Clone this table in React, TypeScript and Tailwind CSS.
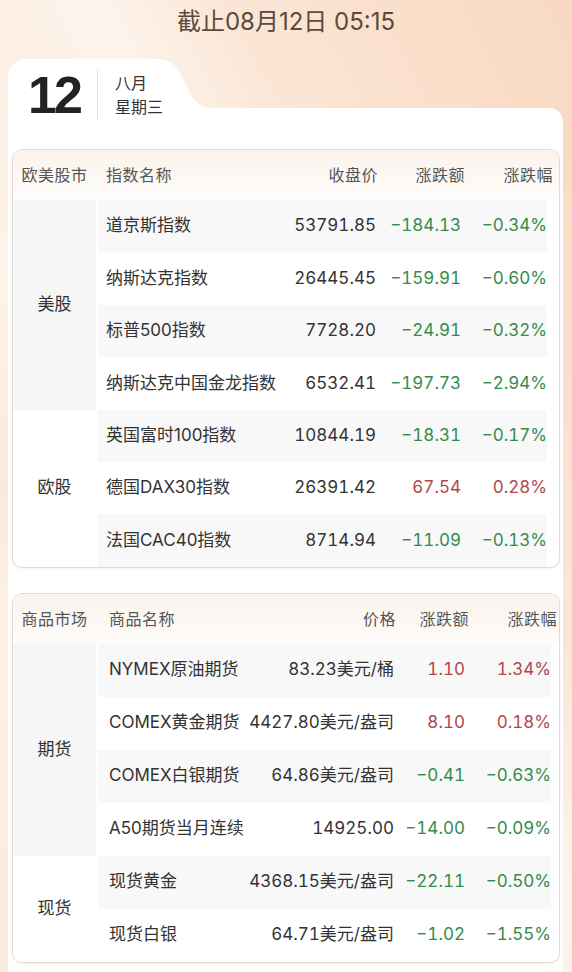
type Row = { name: string; price: string; chg: string; pct: string };
type Group = { label: string; rows: Row[] };

const stocks: Group[] = [
  {
    label: "美股",
    rows: [
      { name: "道京斯指数", price: "53791.85", chg: "−184.13", pct: "−0.34%" },
      { name: "纳斯达克指数", price: "26445.45", chg: "−159.91", pct: "−0.60%" },
      { name: "标普500指数", price: "7728.20", chg: "−24.91", pct: "−0.32%" },
      { name: "纳斯达克中国金龙指数", price: "6532.41", chg: "−197.73", pct: "−2.94%" },
    ],
  },
  {
    label: "欧股",
    rows: [
      { name: "英国富时100指数", price: "10844.19", chg: "−18.31", pct: "−0.17%" },
      { name: "德国DAX30指数", price: "26391.42", chg: "67.54", pct: "0.28%" },
      { name: "法国CAC40指数", price: "8714.94", chg: "−11.09", pct: "−0.13%" },
    ],
  },
];

const goods: Group[] = [
  {
    label: "期货",
    rows: [
      { name: "NYMEX原油期货", price: "83.23美元/桶", chg: "1.10", pct: "1.34%" },
      { name: "COMEX黄金期货", price: "4427.80美元/盎司", chg: "8.10", pct: "0.18%" },
      { name: "COMEX白银期货", price: "64.86美元/盎司", chg: "−0.41", pct: "−0.63%" },
      { name: "A50期货当月连续", price: "14925.00", chg: "−14.00", pct: "−0.09%" },
    ],
  },
  {
    label: "现货",
    rows: [
      { name: "现货黄金", price: "4368.15美元/盎司", chg: "−22.11", pct: "−0.50%" },
      { name: "现货白银", price: "64.71美元/盎司", chg: "−1.02", pct: "−1.55%" },
    ],
  },
];

type Cols = { name: string; price: string; chg: string; pct: string; rowH: string };

const stockCols: Cols = {
  name: "w-[178px] pl-[8px]",
  price: "w-[100px]",
  chg: "w-[85px]",
  pct: "w-[86px]",
  rowH: "h-[52.4px]",
};

const goodsCols: Cols = {
  name: "w-[150px] pl-[11px]",
  price: "w-[146px]",
  chg: "w-[71px]",
  pct: "w-[86px]",
  rowH: "h-[53px]",
};

function color(v: string) {
  return v.startsWith("−") ? "text-[#338c4c]" : "text-[#b0474c]";
}

function Table({
  head,
  groups,
  cols,
}: {
  head: [string, string, string, string, string];
  groups: Group[];
  cols: Cols;
}) {
  let idx = 0;
  return (
    <div className="rounded-[10px] border border-[#e6d9cf] overflow-hidden bg-white shadow-[0_1px_2px_rgba(150,110,80,0.08)]">
      <div className="flex h-[50px] items-center gap-[2px] bg-gradient-to-b from-[#fbf3ec] to-[#fefcfa] text-[16px] tracking-[0.5px] text-[#555]">
        <div className="w-[83px] text-center">{head[0]}</div>
        <div className={cols.name}>{head[1]}</div>
        <div className={`${cols.price} text-right`}>{head[2]}</div>
        <div className={`${cols.chg} text-right`}>{head[3]}</div>
        <div className={`${cols.pct} text-right`}>{head[4]}</div>
      </div>
      {groups.map((g, gi) => (
        <div key={g.label} className="flex gap-[2px]">
          <div
            className={`w-[83px] shrink-0 flex items-center justify-center text-[17px] text-[#333] ${
              gi % 2 === 0 ? "bg-[#f6f6f6]" : "bg-white"
            }`}
          >
            {g.label}
          </div>
          <div className="flex flex-col">
            {g.rows.map((r) => {
              const gray = idx++ % 2 === 0;
              return (
                <div
                  key={r.name}
                  className={`flex items-center ${cols.rowH} text-[17px] text-[#333] whitespace-nowrap ${
                    gray ? "bg-[#f8f8f8]" : "bg-white"
                  }`}
                >
                  <div className={cols.name}>{r.name}</div>
                  <div className={`${cols.price} text-right tabular-nums`}>{r.price}</div>
                  <div className={`${cols.chg} text-right tabular-nums ${color(r.chg)}`}>{r.chg}</div>
                  <div className={`${cols.pct} text-right tabular-nums ${color(r.pct)}`}>{r.pct}</div>
                </div>
              );
            })}
          </div>
        </div>
      ))}
    </div>
  );
}

export default function App() {
  return (
    <div className="min-h-[972px] flex flex-col font-['Inter','Noto_Sans_CJK_SC',sans-serif] bg-[linear-gradient(62deg,#fbe9dc_0%,#fdf1e7_18%,#fbe8da_24%,#fdf3ea_34%,#fcefe4_46%,#fdf4ec_56%,#fbe6d6_68%,#fae0cc_82%,#f8d8c0_100%)]">
      <div className="h-[43px] flex items-center justify-center text-[24px] text-[#5c4a3f]">
        截止08月12日 05:15
      </div>

      <div className="mt-[16px] ml-[8px] mr-[9px] flex flex-col flex-1">
        {/* tab */}
        <div className="flex h-[49px]">
          <div className="w-[148px] bg-white rounded-tl-[18px]" />
          <svg width="60" height="49" viewBox="0 0 60 49" className="block">
            <path
              d="M0 0 C12 0 18 4 24 14 L35 36 C40 45 46 49 60 49 L0 49 Z"
              fill="#ffffff"
            />
          </svg>
        </div>

        <div className="flex-1 bg-white rounded-tr-[14px] pl-[4px] pr-[3px] pb-[12px]">
          <div className="-mt-[38px] h-[50px] flex items-center relative">
            <div className="pl-[16px] w-[85px] font-['Liberation_Sans',sans-serif] font-bold text-[52px] tracking-[-3px] leading-none text-[#222]">
              12
            </div>
            <div className="w-px h-[50px] bg-[#e3e3e3]" />
            <div className="pl-[17px] text-[16px] leading-[24px] text-[#333]">
              <div>八月</div>
              <div>星期三</div>
            </div>
          </div>

          <div className="mt-[29px]">
            <Table
              head={["欧美股市", "指数名称", "收盘价", "涨跌额", "涨跌幅"]}
              groups={stocks}
              cols={stockCols}
            />
          </div>

          <div className="mt-[25px]">
            <Table
              head={["商品市场", "商品名称", "价格", "涨跌额", "涨跌幅"]}
              groups={goods}
              cols={goodsCols}
            />
          </div>
        </div>
      </div>
    </div>
  );
}
